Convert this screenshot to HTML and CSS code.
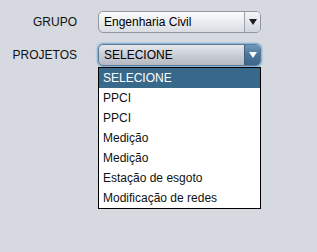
FILE: index.html
```html
<!DOCTYPE html>
<html lang="pt">
<head>
  <meta charset="UTF-8">
  <title>Projetos</title>
  <link rel="stylesheet" href="styles.css">
</head>
<body>

<div class="form">
  <label class="label">GRUPO</label>
  <div class="field">
    <div class="combo">
      <span class="value">Engenharia Civil</span>
      <span class="arrow"><svg width="8" height="6" viewBox="0 0 8 6"><path d="M0 0H8L4 6Z" fill="#1b1d22"/></svg></span>
    </div>
  </div>

  <label class="label">PROJETOS</label>
  <div class="field">
    <div class="combo focused">
      <span class="value">SELECIONE</span>
      <span class="arrow"><svg width="8" height="6" viewBox="0 0 8 6"><path d="M0 0H8L4 6Z" fill="#ffffff"/></svg></span>
    </div>
    <ul class="popup">
      <li class="selected">SELECIONE</li>
      <li>PPCI</li>
      <li>PPCI</li>
      <li>Medição</li>
      <li>Medição</li>
      <li>Estação de esgoto</li>
      <li>Modificação de redes</li>
    </ul>
  </div>
</div>

</body>
</html>
```

FILE: styles.css
```css
* {
  box-sizing: border-box;
}

body {
  margin: 0;
  background-color: #d6d9df;
  font-family: "Liberation Sans", Arial, sans-serif;
  font-size: 12px;
  color: #000;
}

.form {
  display: grid;
  grid-template-columns: 77px 163px;
  column-gap: 21px;
  row-gap: 11px;
  padding-top: 11px;
  align-items: start;
}

.label {
  text-align: right;
  line-height: 22px;
  color: #111;
}

.combo {
  display: flex;
  height: 22px;
  border: 1px solid #8e97a3;
  border-radius: 5px;
  background: linear-gradient(#fcfcfd, #eceef1 45%, #d9dce2);
  overflow: hidden;
}

.value {
  flex: 1;
  padding-left: 5px;
  line-height: 20px;
}

.arrow {
  width: 16px;
  display: flex;
  align-items: center;
  justify-content: center;
  border-left: 1px solid #9aa2ad;
  background: linear-gradient(#f4f5f7, #d2d6dd);
}

.combo.focused {
  border-color: #5b7a97;
  box-shadow: 0 0 0 1px #8fb4d8, 0 0 1px 2px #b6cde2;
  background: linear-gradient(#e6e8ec, #c9cdd5 50%, #b4b9c3);
}

.combo.focused .arrow {
  border-left-color: #3b5f80;
  background: linear-gradient(#7197ba, #4c7599 50%, #3b6488);
}

.popup {
  margin: 1px 0 0;
  padding: 0;
  list-style: none;
  background: #fff;
  border: 1px solid #000;
}

.popup li {
  height: 20px;
  line-height: 20px;
  padding-left: 4px;
  color: #111;
}

.popup li.selected {
  background-color: #39698a;
  color: #fff;
}
```
